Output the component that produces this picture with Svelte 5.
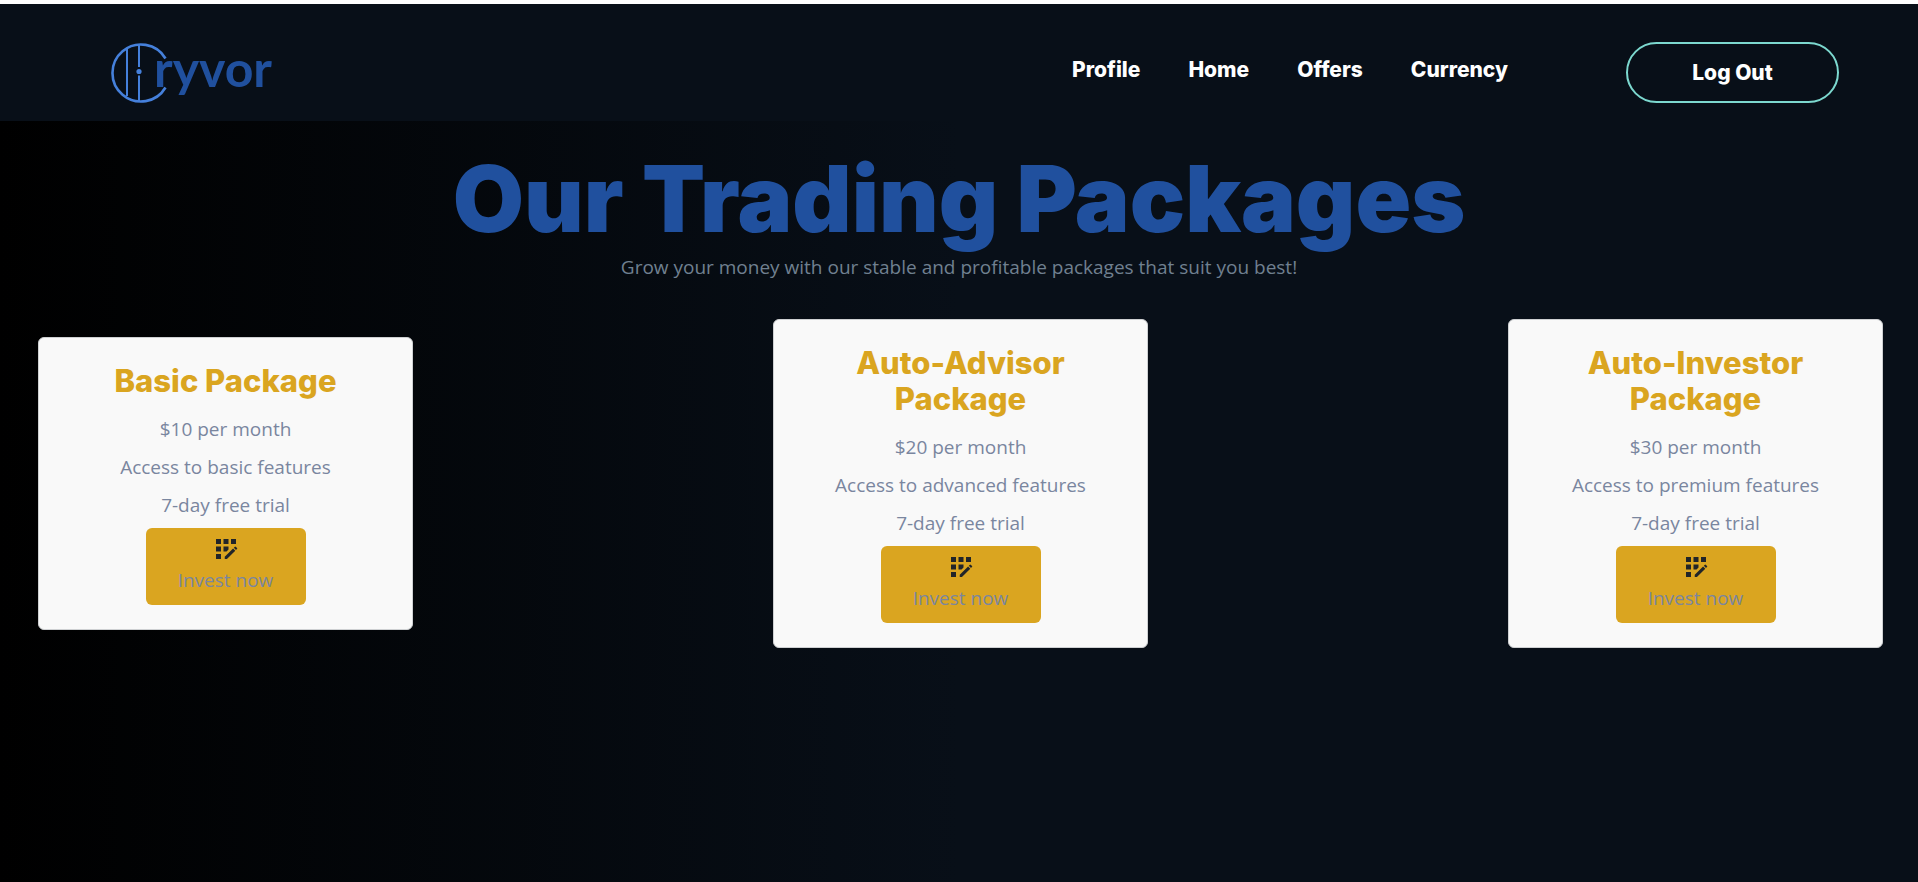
<script>
  const links = ['Profile', 'Home', 'Offers', 'Currency'];
  const packages = [
    { name: 'Basic Package', price: '$10 per month', access: 'Access to basic features', trial: '7-day free trial' },
    { name: 'Auto-Advisor Package', price: '$20 per month', access: 'Access to advanced features', trial: '7-day free trial' },
    { name: 'Auto-Investor Package', price: '$30 per month', access: 'Access to premium features', trial: '7-day free trial' }
  ];
</script>

<div class="page">
  <header>
    <a class="logo" href="#home" aria-label="Cryvor">
      <svg viewBox="0 0 56 60" width="56" height="60" fill="none" stroke="#4580db" aria-hidden="true">
        <path d="M54.5 15.5A28.5 28.5 0 1 0 54.5 44.5" stroke-width="2.6" />
        <path d="M16 5.5V53M28 2V24M28 32.500V58" stroke-width="2" />
        <circle cx="28" cy="28.500" r="2.600" fill="#4580db" stroke="none" />
      </svg>
      <span>ryvor</span>
    </a>
    <nav>
      {#each links as link}
        <a href={'#' + link.toLowerCase()}>{link}</a>
      {/each}
    </nav>
    <button class="logout" type="button">Log Out</button>
  </header>

  <main>
    <h1>Our Trading Packages</h1>
    <p class="lead">Grow your money with our stable and profitable packages that suit you best!</p>
    <section class="cards">
      {#each packages as pack}
        <article>
          <h2>{pack.name}</h2>
          <p>{pack.price}</p>
          <p>{pack.access}</p>
          <p>{pack.trial}</p>
          <button class="invest" type="button">
            <svg viewBox="0 0 24 24" width="30" height="30" fill="#212529" aria-hidden="true">
              <path d="M4 4h4v4H4zM10 4h4v4h-4zM16 4h4v4h-4zM4 10h4v4H4zM4 16h4v4H4zM14 12.420V10h-4v4h2.420z" />
              <path d="M20.880 11.290l-1.170-1.170a.41.41 0 0 0-.58 0l-.88.88L20 12.750l.88-.88a.41.41 0 0 0 0-.58zM11 18.250V20h1.750l6.670-6.670-1.750-1.750z" />
            </svg>
            <span>Invest now</span>
          </button>
        </article>
      {/each}
    </section>
  </main>
</div>

<style>
  :global(body) {
    margin: 0;
    background: #fff;
  }
  .page {
    display: flex;
    flex-direction: column;
    min-height: 100vh;
    box-sizing: border-box;
    padding-top: 4px;
    font-family: 'Open Sans', 'Noto Sans', sans-serif;
  }
  header {
    display: flex;
    align-items: center;
    height: 117px;
    box-sizing: border-box;
    padding: 20px 79px 0 111px;
    background: #080f18;
  }
  .logo {
    display: flex;
    align-items: center;
    margin-right: auto;
    color: #20509e;
    text-decoration: none;
    font: 700 50px/56px Lato, sans-serif;
  }
  .logo span {
    margin-left: -13px;
    padding-bottom: 10px;
  }
  nav {
    display: flex;
    gap: 48px;
    margin-right: 118px;
    padding-bottom: 6px;
  }
  nav a,
  .logout {
    color: #fff;
    font: 800 21px/30px Inter, sans-serif;
    text-decoration: none;
  }
  .logout {
    width: 213px;
    height: 61px;
    border: 2px solid #7cd8cf;
    border-radius: 31px;
    background: transparent;
  }
  main {
    flex: 1;
    text-align: center;
    background: linear-gradient(to right, #000 0%, #080f18 50%);
  }
  h1 {
    margin: 0;
    padding-top: 22px;
    color: #20509e;
    font: 900 92px/112px Inter, sans-serif;
  }
  .lead {
    margin: 0;
    padding-bottom: 40px;
    color: #708090;
    font-size: 19px;
    line-height: 24px;
  }
  .cards {
    display: flex;
    align-items: center;
    justify-content: space-between;
    gap: 24px;
    padding: 0 35px 0 38px;
  }
  article {
    display: flex;
    flex-direction: column;
    align-items: center;
    width: 375px;
    box-sizing: border-box;
    padding: 25px 24px 24px;
    border: 1px solid #ced0d2;
    border-radius: 6px;
    background: #f9f9f9;
  }
  h2 {
    max-width: 270px;
    margin: 0 0 15px;
    color: #daa520;
    font: 800 31px/36px Inter, sans-serif;
  }
  article p {
    margin: 0 0 8px;
    color: #7a869f;
    font-size: 19px;
    line-height: 30px;
  }
  .invest {
    display: flex;
    flex-direction: column;
    align-items: center;
    width: 160px;
    height: 77px;
    padding: 6px;
    border: 0;
    border-radius: 6px;
    background: #daa520;
    color: #7a869f;
    font: 19px/32px 'Open Sans', 'Noto Sans', sans-serif;
  }
</style>
